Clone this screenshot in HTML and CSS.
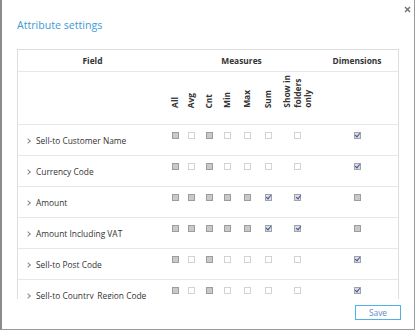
FILE: index.html
```html
<!DOCTYPE html>
<html lang="en">
  <head>
    <meta charset="UTF-8" />
    <meta name="viewport" content="width=device-width, initial-scale=1.0" />
    <title>Attribute settings</title>
    <link rel="stylesheet" href="styles.css">
  </head>
  <body>
    <div class="dialog">
      <div class="dialog-head">
        <h1 class="dialog-title">Attribute settings</h1>
        <button class="close-btn" title="Close">
          <svg width="7" height="7" viewBox="0 0 7 7"><path d="M1 1L6 6M6 1L1 6" stroke="#6f6f6f" stroke-width="1.4"/></svg>
        </button>
      </div>

      <div class="grid-wrap">
        <table class="grid">
          <colgroup>
            <col style="width:149px">
            <col style="width:16px">
            <col style="width:17px">
            <col style="width:18px">
            <col style="width:19px">
            <col style="width:20px">
            <col style="width:22px">
            <col style="width:37px">
            <col>
          </colgroup>
          <thead>
            <tr class="head-top">
              <th>Field</th>
              <th colspan="7">Measures</th>
              <th>Dimensions</th>
            </tr>
            <tr class="head-rot">
              <th></th>
              <th><span class="rot">All</span></th>
              <th><span class="rot">Avg</span></th>
              <th><span class="rot">Cnt</span></th>
              <th><span class="rot">Min</span></th>
              <th><span class="rot">Max</span></th>
              <th><span class="rot">Sum</span></th>
              <th><span class="rot">Show in<br>folders<br>only</span></th>
              <th></th>
            </tr>
          </thead>
          <tbody>
            <tr>
              <td class="name"><span class="chev"></span>Sell-to Customer Name</td>
              <td><span class="cb dark"></span></td>
              <td><span class="cb"></span></td>
              <td><span class="cb dark"></span></td>
              <td><span class="cb"></span></td>
              <td><span class="cb"></span></td>
              <td><span class="cb"></span></td>
              <td><span class="cb"></span></td>
              <td><span class="cb checked"></span></td>
            </tr>
            <tr>
              <td class="name"><span class="chev"></span>Currency Code</td>
              <td><span class="cb dark"></span></td>
              <td><span class="cb"></span></td>
              <td><span class="cb dark"></span></td>
              <td><span class="cb"></span></td>
              <td><span class="cb"></span></td>
              <td><span class="cb"></span></td>
              <td><span class="cb"></span></td>
              <td><span class="cb checked"></span></td>
            </tr>
            <tr>
              <td class="name"><span class="chev"></span>Amount</td>
              <td><span class="cb dark"></span></td>
              <td><span class="cb dark"></span></td>
              <td><span class="cb dark"></span></td>
              <td><span class="cb dark"></span></td>
              <td><span class="cb dark"></span></td>
              <td><span class="cb checked"></span></td>
              <td><span class="cb checked"></span></td>
              <td><span class="cb dark"></span></td>
            </tr>
            <tr>
              <td class="name"><span class="chev"></span>Amount Including VAT</td>
              <td><span class="cb dark"></span></td>
              <td><span class="cb dark"></span></td>
              <td><span class="cb dark"></span></td>
              <td><span class="cb dark"></span></td>
              <td><span class="cb dark"></span></td>
              <td><span class="cb checked"></span></td>
              <td><span class="cb checked"></span></td>
              <td><span class="cb dark"></span></td>
            </tr>
            <tr>
              <td class="name"><span class="chev"></span>Sell-to Post Code</td>
              <td><span class="cb dark"></span></td>
              <td><span class="cb"></span></td>
              <td><span class="cb dark"></span></td>
              <td><span class="cb"></span></td>
              <td><span class="cb"></span></td>
              <td><span class="cb"></span></td>
              <td><span class="cb"></span></td>
              <td><span class="cb checked"></span></td>
            </tr>
            <tr>
              <td class="name"><span class="chev"></span>Sell-to Country_Region Code</td>
              <td><span class="cb dark"></span></td>
              <td><span class="cb"></span></td>
              <td><span class="cb dark"></span></td>
              <td><span class="cb"></span></td>
              <td><span class="cb"></span></td>
              <td><span class="cb"></span></td>
              <td><span class="cb"></span></td>
              <td><span class="cb checked"></span></td>
            </tr>
          </tbody>
        </table>
      </div>

      <div class="dialog-foot">
        <button class="save-btn">Save</button>
      </div>
    </div>
  </body>
</html>
```

FILE: styles.css
```css
body {
  margin: 0;
  background-color: #ffffff;
  font-family: "Open Sans", "Noto Sans", sans-serif;
  color: #333333;
}

.dialog {
  width: 415px;
  height: 330px;
  box-sizing: border-box;
  border-left: 2px solid #8c8c8c;
  border-right: 1px solid #9a9a9a;
  border-bottom: 1px solid #9a9a9a;
  display: flex;
  flex-direction: column;
  overflow: hidden;
}

.dialog-head {
  display: flex;
  justify-content: space-between;
  align-items: flex-start;
  padding: 0 3px 0 15px;
  height: 33px;
}

.dialog-title {
  margin: 0;
  padding-top: 18px;
  font-size: 10.6px;
  line-height: 15px;
  font-weight: 400;
  color: #3f9ad6;
}

.close-btn {
  margin-top: 5px;
  padding: 0;
  border: none;
  background: transparent;
  width: 8px;
  height: 8px;
  line-height: 0;
  cursor: pointer;
}

.grid-wrap {
  margin: 16px 15px 0 15px;
  height: 250px;
  box-sizing: border-box;
  border: 1px solid #dedede;
  border-bottom: none;
  overflow: hidden;
}

.grid {
  width: 100%;
  table-layout: fixed;
  border-collapse: separate;
  border-spacing: 0;
  font-size: 8.4px;
}

.grid th,
.grid td {
  padding: 0;
  box-sizing: border-box;
  border-bottom: 1px solid #e6e6e6;
}

.grid th {
  font-weight: 700;
  color: #333333;
}

.head-top th {
  height: 22px;
  text-align: center;
  vertical-align: middle;
}

.head-rot th {
  height: 53px;
  vertical-align: bottom;
  text-align: center;
  padding-bottom: 16px;
  line-height: 0;
}

.rot {
  display: inline-block;
  vertical-align: bottom;
  writing-mode: vertical-rl;
  transform: rotate(180deg);
  line-height: 10.5px;
  text-align: left;
  white-space: nowrap;
}

.grid td {
  height: 31px;
  text-align: center;
  vertical-align: top;
  padding-top: 7px;
  line-height: 0;
}

.grid td.name {
  text-align: left;
  vertical-align: middle;
  padding: 1px 0 0 8px;
  line-height: 12px;
  white-space: nowrap;
  color: #333333;
}

.chev {
  display: inline-block;
  width: 3px;
  height: 3px;
  border-right: 1px solid #8a8a8a;
  border-bottom: 1px solid #8a8a8a;
  transform: rotate(-45deg);
  margin: 0 6px 1px 0;
  vertical-align: middle;
}

.cb {
  display: inline-block;
  position: relative;
  width: 7px;
  height: 7px;
  box-sizing: border-box;
  border: 1px solid #d3d3d3;
  background-color: #ffffff;
  vertical-align: top;
}

.cb.dark {
  border-color: #9d9d9d;
  background-color: #c9c9c9;
}

.cb.checked {
  border-color: #a3a3a3;
  background-color: #dcdcdc;
}

.cb.checked::after {
  content: "";
  position: absolute;
  left: 1.5px;
  top: -1px;
  width: 2px;
  height: 4px;
  border-right: 1.3px solid #3556b0;
  border-bottom: 1.3px solid #3556b0;
  transform: rotate(40deg);
}

.dialog-foot {
  display: flex;
  justify-content: flex-end;
  padding: 6px 13px 0 0;
}

.save-btn {
  width: 46px;
  height: 15px;
  padding: 0;
  border: 1px solid #4fb3e8;
  background-color: #ffffff;
  color: #5b8cd0;
  font-family: "Open Sans", "Noto Sans", sans-serif;
  font-size: 8.4px;
  line-height: 12px;
  cursor: pointer;
}
```
